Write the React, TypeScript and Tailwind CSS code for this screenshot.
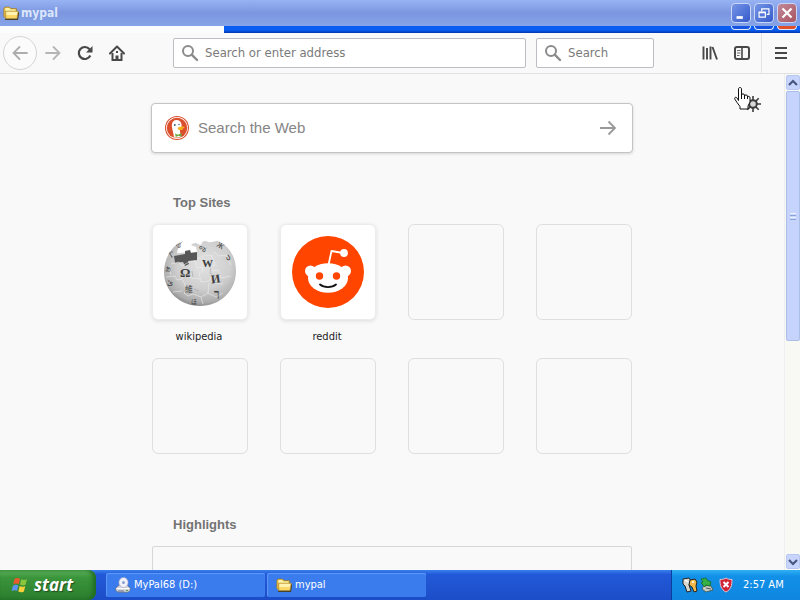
import type { ReactNode } from 'react';

function FolderIcon() {
  return (
    <svg viewBox="0 0 16 16" className="w-4 h-4 shrink-0">
      <path d="M2 14.500h12.500L15.800 7" fill="none" stroke="#4d4222" strokeWidth="1.200" />
      <path d="M.8 3.500 2 2h4.500L8 3.500h5.500V13h-11L.8 11.500z" fill="#e9bd45" stroke="#8f7428" strokeWidth=".6" />
      <path d="M2 4l1-1h3l1.500 1.500h5V7H3z" fill="#fdf3a8" />
      <path d="M2.500 6.200h12.800L14 13.500H2.800z" fill="#fbd765" stroke="#a27f2b" strokeWidth=".6" />
      <path d="M3.500 7h10.800l-.6 3H3.500z" fill="#fff3b4" />
    </svg>
  );
}

function DriveIcon() {
  return (
    <svg viewBox="0 0 16 16" className="w-4 h-4 shrink-0">
      <path d="M.8 11l3.500-3H12l3.200 3v2.500L13 15.200H3L.8 13.500z" fill="#d3d5dc" stroke="#555b70" strokeWidth=".6" />
      <path d="M1.500 11.500h13" stroke="#fff" />
      <path d="M3 14h6" stroke="#6c7388" />
      <ellipse cx="8.500" cy="5.500" rx="4.600" ry="5" fill="#f2f3fa" stroke="#9aa2bb" strokeWidth=".6" />
      <circle cx="8.500" cy="5.500" r="1.500" fill="#8ba2cf" />
      <path d="M11 13.500h2" stroke="#48a048" />
    </svg>
  );
}

function SearchIcon() {
  return (
    <svg viewBox="0 0 18 18" className="w-[18px] h-[18px] shrink-0" fill="none" stroke="#8b8b8b">
      <circle cx="7" cy="7" r="5" strokeWidth="2" />
      <path d="M10.700 10.700 16 16" strokeWidth="2.400" strokeLinecap="round" />
    </svg>
  );
}

function DuckIcon() {
  return (
    <svg viewBox="0 0 24 24" className="w-6 h-6 shrink-0">
      <circle cx="12" cy="12" r="12" fill="#d9522f" />
      <circle cx="12" cy="12" r="10.900" fill="#fff" />
      <circle cx="12" cy="12" r="10.200" fill="#dc4f2c" />
      <path d="M9 21.300C8.500 16 6.300 11.500 7 8c.6-2.800 2.500-4.300 5-4 3 .3 4.500 2.500 4.600 5.200.1 2-.8 4-1.800 5l1 6c-2 1.500-4.300 1.700-6.800 1.100z" fill="#fff" />
      <path d="M13 11.500c2-1 4.500-1.200 6.300-.8.8.4-.5 1.400-2 1.800 1 .3.700 1.300-.8 1.500-1.800.2-4.500-.2-3.500-2.500z" fill="#f7b21b" />
      <path d="M10 17.500l3 1.200 3.500-1.700v3.800l-3-1-2.800 1.200z" fill="#69a845" />
      <circle cx="9.800" cy="9" r=".9" fill="#34516b" />
      <circle cx="14" cy="8.500" r=".7" fill="#34516b" />
    </svg>
  );
}

function WikipediaLogo() {
  return (
    <svg viewBox="0 0 72 72" className="w-[72px] h-[72px]" fontFamily="Liberation Serif, Noto Sans CJK SC, serif" fill="#3d3d3d">
      <defs>
        <radialGradient id="globe" cx=".55" cy=".36" r=".68">
          <stop offset="0" stopColor="#e2e2e2" />
          <stop offset=".55" stopColor="#cfcfcf" />
          <stop offset=".85" stopColor="#adadad" />
          <stop offset="1" stopColor="#7d7d7d" />
        </radialGradient>
      </defs>
      <path
        d="M19 5c-2 3-5 6-6 12l20-1-1-5-5-2c2-2 5-3 7-1l3 1c1-4 4-5 7-3 3 1 6-1 9-1C65 9 72 21 72 35c0 20-16 35-36 35S0 55 0 36C0 23 7 10 19 5z"
        fill="url(#globe)"
      />
      <path d="M10 20l11-2v-3l5-1 1 3 6-1v8l-9 1 1 3-4 2-2-4-8 1z" fill="#575757" />
      <g fill="none" stroke="#ececec" strokeWidth=".6">
        <path d="M7 28l8-2 3 4 5-3 8-2 2 7 5-1 1 4-4 2 2 9 8-1 2-4 4 2-1 4 9 1M33 23l8-4 7 1 3-4 3 4 9-1M48 20l3 9-4 2 2 4 5-1 3 8 10-2M2 41l9-1 2 4 5-1 1-4 9 3 8 1M19 44l4 10-3 3 4 3 5-2 8 3 7-4 1-10M44 57l8 4 7-4" />
        <path d="M37 61l2 7M9 56l9-1M5 30l2 9M62 19l5 10" />
      </g>
      <path d="M28 35l1 6M47 31l-1 6 5 4M30 53l5 2" fill="none" stroke="#9a9a9a" strokeWidth=".5" />
      <text x="16" y="41" fontSize="13" fontWeight="bold">Ω</text>
      <text x="38" y="31" fontSize="11" fontWeight="bold">W</text>
      <text x="47" y="47" fontSize="12" fontWeight="bold" transform="rotate(-8 51 43)">И</text>
      <text x="21" y="56" fontSize="8">維</text>
      <text x="50" y="61" fontSize="11" fontWeight="bold">ך</text>
      <text x="1" y="35" fontSize="6">あ</text>
      <text x="3" y="49" fontSize="8">ئ</text>
      <text x="35" y="15" fontSize="8" transform="rotate(20 38 12)">જ</text>
      <text x="53" y="12" fontSize="8" transform="rotate(30 56 9)">Ж</text>
      <text x="62" y="24" fontSize="9">ა</text>
      <text x="5" y="21" fontSize="8" transform="rotate(-30 8 18)">Г</text>
      <text x="12" y="12" fontSize="7" transform="rotate(-30 14 9)">ש</text>
      <text x="27" y="68" fontSize="6">ほ</text>
    </svg>
  );
}

function RedditLogo() {
  return (
    <svg viewBox="0 0 72 72" className="w-[72px] h-[72px]">
      <circle cx="36" cy="36" r="36" fill="#ff4500" />
      <path d="M36.500 29 39.500 15 51 17" fill="none" stroke="#fff" strokeWidth="1.800" strokeLinejoin="round" />
      <circle cx="52" cy="17" r="3.900" fill="#fff" />
      <circle cx="18.500" cy="35" r="5.500" fill="#fff" />
      <circle cx="53.500" cy="35" r="5.500" fill="#fff" />
      <ellipse cx="36" cy="42" rx="20" ry="14.800" fill="#fff" />
      <circle cx="27.500" cy="40" r="3.700" fill="#ff4500" />
      <circle cx="44.500" cy="40" r="3.700" fill="#ff4500" />
      <path d="M28 48.500c4 3.400 12 3.400 16 0" fill="none" stroke="#111" strokeWidth="1.800" strokeLinecap="round" />
    </svg>
  );
}

function ToolButton({ label, children }: { label: string; children: ReactNode }) {
  return (
    <button aria-label={label} className="w-8 h-8 flex items-center justify-center text-[#484848]">
      {children}
    </button>
  );
}

const captionButtons = [
  {
    label: 'Minimize',
    top: 'bg-linear-to-br from-[#7795e6] to-[#3459cb]',
    bottom: 'bg-[#1553e0]',
    icon: <path d="M5 15h7" strokeWidth="3" />,
  },
  {
    label: 'Restore',
    top: 'bg-linear-to-br from-[#7795e6] to-[#3459cb]',
    bottom: 'bg-[#1553e0]',
    icon: <path d="M7.500 8V5.500h8v6H13M7.500 5.500h8M4.500 9.500h7v5h-7zM4 9h8" strokeWidth="1.300" />,
  },
  {
    label: 'Close',
    top: 'bg-linear-to-br from-[#c18a9c] to-[#a9545f]',
    bottom: 'bg-[#e0502a]',
    icon: <path d="M5 5l10 10M15 5 5 15" strokeWidth="2.400" />,
  },
];

function TitleBar() {
  return (
    <header>
      <div className="h-[26px] flex items-center px-[3px] bg-linear-to-b from-[#98b3f3] via-[#7b96df] to-[#86a4e8]">
        <FolderIcon />
        <h1 className="ml-0.5 flex-1 font-[DejaVu_Sans_Condensed,sans-serif] font-bold text-xs text-[#dbe6fc]">mypal</h1>
        <div className="flex gap-[3px]">
          {captionButtons.map((b) => (
            <button
              key={b.label}
              aria-label={b.label}
              className={`w-5 h-5 rounded-sm border border-[#c9d6f8] ${b.top}`}
            >
              <svg viewBox="0 0 20 20" className="w-[18px] h-[18px]" fill="none" stroke="#fff">{b.icon}</svg>
            </button>
          ))}
        </div>
      </div>
      <div className="h-[7px] flex">
        <div className="w-56 bg-[#fbfdfd]" />
        <div className="flex-1 flex justify-end gap-[3px] pr-[3px] bg-linear-to-b from-[#0a5df2] from-60% to-[#0237ad]">
          {captionButtons.map((b) => (
            <div key={b.label} className={`w-5 h-1 rounded-b-sm border border-t-0 border-[#dfe7fb] ${b.bottom}`} />
          ))}
        </div>
      </div>
    </header>
  );
}

function Toolbar() {
  return (
    <nav className="h-[41px] shrink-0 flex items-center pl-[3px] bg-[#f9f9fa] border-b border-[#e0e0e1]">
      <button aria-label="Back" className="w-[34px] h-[34px] rounded-full border border-[#d4d4d4] bg-[#fbfbfb] flex items-center justify-center text-[#adadad]">
        <svg viewBox="0 0 16 16" className="w-4 h-4" fill="none" stroke="currentColor" strokeWidth="1.800" strokeLinecap="round">
          <path d="M15 8H1.500M7.500 2 1.500 8l6 6" />
        </svg>
      </button>
      <div className="flex">
        <button aria-label="Forward" className="w-8 h-8 flex items-center justify-center text-[#b5b5b5]">
          <svg viewBox="0 0 16 16" className="w-4 h-4" fill="none" stroke="currentColor" strokeWidth="1.800" strokeLinecap="round">
            <path d="M1 8h13.500M8.500 2l6 6-6 6" />
          </svg>
        </button>
        <ToolButton label="Reload">
          <svg viewBox="0 0 16 16" className="w-4 h-4" fill="none" stroke="currentColor" strokeWidth="2.200">
            <path d="M13.300 10.500A6 6 0 1 1 12.500 4.200" />
            <path d="M15.500 1v6.500H9z" fill="currentColor" stroke="none" />
          </svg>
        </ToolButton>
        <ToolButton label="Home">
          <svg viewBox="0 0 16 16" className="w-4 h-4" fill="none" stroke="currentColor" strokeWidth="2">
            <path d="M1 8.500 8 1.500l7 7" strokeLinecap="round" strokeLinejoin="round" />
            <path d="M3.500 8v7h9V8" />
            <path d="M6.500 15v-4.500h3V15z" fill="currentColor" stroke="none" />
            <path d="M7 7h2" />
          </svg>
        </ToolButton>
      </div>
      <label className="ml-10 flex-1 h-[30px] flex items-center gap-1.5 px-[7px] bg-white border border-[#bdbdc4] rounded-xs">
        <SearchIcon />
        <input aria-label="Search or enter address" placeholder="Search or enter address" className="flex-1 min-w-0 outline-none text-[13px] placeholder:text-[#7a7a7a]" />
      </label>
      <label className="ml-2.5 w-[118px] h-[30px] flex items-center gap-1.5 px-[7px] bg-white border border-[#bdbdc4] rounded-xs">
        <SearchIcon />
        <input aria-label="Search" placeholder="Search" className="flex-1 min-w-0 outline-none text-[13px] placeholder:text-[#7a7a7a]" />
      </label>
      <div className="ml-10 flex items-center">
        <ToolButton label="Library">
          <svg viewBox="0 0 16 16" className="w-4 h-4" fill="none" stroke="currentColor" strokeWidth="1.900">
            <path d="M1.500 1.500v13M5 3v11.500M8.500 1.500v13M10.500 2l4.500 12.500" />
          </svg>
        </ToolButton>
        <ToolButton label="Sidebars">
          <svg viewBox="0 0 16 16" className="w-4 h-4" fill="none" stroke="currentColor">
            <rect x="1" y="2" width="14" height="12" rx="2" strokeWidth="2" />
            <path d="M8 2v12" strokeWidth="1.600" />
            <path d="M3 5.500h3.500M3 8h3.500M3 10.500h2.500" strokeWidth=".8" />
          </svg>
        </ToolButton>
      </div>
      <div className="ml-[3px] h-10 w-[39px] flex items-center justify-center border-l border-[#e3e3e4]">
        <ToolButton label="Open menu">
          <svg viewBox="0 0 16 16" className="w-4 h-4" stroke="currentColor" strokeWidth="2">
            <path d="M2 3h12M2 8h12M2 13h12" />
          </svg>
        </ToolButton>
      </div>
    </nav>
  );
}

const topSites = [
  { name: 'wikipedia', logo: <WikipediaLogo /> },
  { name: 'reddit', logo: <RedditLogo /> },
];

function NewTab() {
  return (
    <main className="relative flex-1 overflow-hidden bg-[#f9f9fa] pt-[29px]">
      <button aria-label="Customize your New Tab page" className="absolute top-[22px] right-[23px] w-4 h-4">
        <svg viewBox="0 0 16 16" fill="none" stroke="#3d3d3d">
          <circle cx="8" cy="8" r="3.800" strokeWidth="2" fill="#d8d8d8" />
          <path d="M8 0v4M8 12v4M0 8h4M12 8h4M2.300 2.300l2.800 2.800M10.900 10.900l2.800 2.800M13.700 2.300l-2.800 2.800M5.100 10.900l-2.800 2.800" strokeWidth="1.600" />
        </svg>
      </button>
      <svg viewBox="0 0 17 23" className="absolute top-[13px] right-[33px] w-[17px] h-[23px]" fill="#fff" stroke="#111" strokeLinejoin="round">
        <path d="M4.500 13.500V2c0-2 3-2 3 0v6c0-1.500 3-1.500 3 0v1c0-1.500 3-1.300 3 0v1c.5-1 2.500-.8 2.500.8V15l-2 4v3H6v-2.500L3 15.500.8 12c-.7-1.500 1.200-2.500 2.200-1z" />
        <path d="M7.500 7v5M10.500 8.500V12M13.500 9.500V12" />
      </svg>

      <div className="w-[480px] mx-auto">
        <form className="-mx-px h-[50px] flex items-center pl-[13px] pr-4 bg-white rounded-sm border border-[#c4c4c4] shadow-[0_1px_3px_rgba(0,0,0,0.15)]">
          <DuckIcon />
          <input
            aria-label="Search the Web"
            placeholder="Search the Web"
            className="ml-[9px] flex-1 outline-none font-[Liberation_Sans,sans-serif] text-[15px] placeholder:text-[#858585]"
          />
          <button type="button" aria-label="Search">
            <svg viewBox="0 0 16 16" className="w-4 h-4" fill="none" stroke="#999" strokeWidth="1.800">
              <path d="M0 8h15M8.500 1.500 15 8l-6.500 6.500" />
            </svg>
          </button>
        </form>

        <section className="mt-10">
          <h2 className="pl-[21px] leading-5 font-[Liberation_Sans,sans-serif] font-bold text-[13px] text-[#737373]">Top Sites</h2>
          <ul className="mt-[11px] grid grid-cols-4 gap-x-8">
            {topSites.map((site) => (
              <li key={site.name} className="h-[134px]">
                <a href="#" className="flex flex-col items-center">
                  <span className="w-24 h-24 flex items-center justify-center bg-white rounded-md border border-[#ececec] shadow-[0_1px_4px_rgba(12,12,13,0.12)]">
                    {site.logo}
                  </span>
                  <span className="mt-[9px] pr-0.5 leading-4 text-[11px] text-[#1c1c1c]">{site.name}</span>
                </a>
              </li>
            ))}
            {[3, 4, 5, 6, 7, 8].map((slot) => (
              <li key={slot} className="h-[134px]">
                <div className="w-24 h-24 rounded-md border border-[#dfdfe0]" />
              </li>
            ))}
          </ul>
        </section>

        <section className="mt-[23px]">
          <h2 className="pl-[21px] leading-5 font-[Liberation_Sans,sans-serif] font-bold text-[13px] text-[#737373]">Highlights</h2>
          <div className="mt-[11px] h-64 rounded-xs border border-[#d7d7d8]" />
        </section>
      </div>
    </main>
  );
}

function ScrollBar() {
  const arrow = 'w-[14px] h-[15px] shrink-0 flex items-center justify-center rounded-xs border border-[#b7c7f1] bg-[#c7d4fb]';
  return (
    <div className="w-4 shrink-0 flex flex-col items-center py-px bg-[#f8f8f4] border-l border-[#eceef0]">
      <button aria-label="Scroll up" className={arrow}>
        <svg viewBox="0 0 10 8" className="w-2.5 h-2" fill="none" stroke="#46587f" strokeWidth="2.200">
          <path d="M1 6l4-4 4 4" />
        </svg>
      </button>
      <div className="mt-px w-[14px] basis-[250px] flex flex-col items-center justify-center gap-px rounded-xs border border-[#a9bfe8] bg-[#c6d3fc]">
        <span className="w-1.5 h-px bg-[#eef4fe]" />
        <span className="w-1.5 h-px bg-[#8ca4dc]" />
        <span className="w-1.5 h-px bg-[#eef4fe]" />
        <span className="w-1.5 h-px bg-[#8ca4dc]" />
      </div>
      <button aria-label="Scroll down" className={`mt-auto ${arrow}`}>
        <svg viewBox="0 0 10 8" className="w-2.5 h-2" fill="none" stroke="#46587f" strokeWidth="2.200">
          <path d="M1 2l4 4 4-4" />
        </svg>
      </button>
    </div>
  );
}

const tasks = [
  { title: 'MyPal68 (D:)', icon: <DriveIcon /> },
  { title: 'mypal', icon: <FolderIcon /> },
];

function TaskBar() {
  return (
    <footer className="h-[30px] shrink-0 flex bg-linear-to-b from-[#3a80ee] via-[#2259d8] via-15% to-[#1c4dc8] text-white">
      <button className="w-24 h-full flex items-center gap-1 pl-[11px] rounded-r-lg bg-linear-to-b from-[#5fb45f] via-[#3a953b] via-25% to-[#2b7d2d] shadow-[inset_-3px_0_4px_#1f6a22]">
        <svg viewBox="0 0 19 18" className="w-[19px] h-[18px]">
          <path d="M3.500 3c2-1.400 3.700-1.200 5.500-.2L7.700 8.200C6 7.200 4.200 7.200 2.200 8.400z" fill="#ea5a2c" />
          <path d="M10.300 3.300c1.900 1 3.700 1 5.700-.2l-1.400 5.500c-2 1.200-3.700 1-5.600 0z" fill="#8cc63c" />
          <path d="M1.900 9.700c2-1.200 3.700-1.100 5.500-.2L6 14.900c-1.700-1-3.500-.9-5.400.2z" fill="#5d94ee" />
          <path d="M8.700 10.100c1.900 1 3.600 1 5.600-.1l-1.400 5.400c-2 1.200-3.700 1.100-5.600.1z" fill="#fbcf3b" />
        </svg>
        <span className="font-[Open_Sans,sans-serif] font-bold italic text-[17px] leading-5 [text-shadow:1px_1px_1px_#1e4d1f]">start</span>
      </button>
      <div className="ml-2.5 flex-1 flex gap-0.5 py-[3px]">
        {tasks.map((task) => (
          <button
            key={task.title}
            className="w-[159px] flex items-center gap-[3px] pl-2 rounded-xs bg-[#3a7bee] border-l border-[#5c95f5] text-[11px] shadow-[inset_0_1px_1px_#5f9bf5]"
          >
            {task.icon}
            {task.title}
          </button>
        ))}
      </div>
      <div className="w-[129px] flex items-center pl-2.5 bg-linear-to-b from-[#2fb0f4] via-[#1290e8] via-20% to-[#0f86df] border-l border-[#0c3f9c]">
        <svg viewBox="0 0 16 16" className="w-4 h-4">
          <path d="M1 2l6-1 2 3-2 4 2 6-4 1-2-6-2-2z" fill="#d8d8d0" stroke="#222" />
          <path d="M8 3l5-1 2 3-1 4 1 5-3 1-2-5-3-2z" fill="#f3b94a" stroke="#222" />
          <path d="M3 3l3 2M10 5h2" stroke="#fff" strokeWidth="1.500" />
        </svg>
        <svg viewBox="0 0 16 16" className="w-4 h-4 ml-0.5">
          <path d="M4 8l7 1 2 4-7 2-4-3z" fill="#c5cbc5" stroke="#415041" strokeWidth=".8" />
          <path d="M6 11l5 1" stroke="#555" />
          <path d="M1 2l5-1 1 2 4 2-1 4-4-1-1 2-4-4 2-1z" fill="#35b045" stroke="#176a26" strokeWidth=".8" />
        </svg>
        <svg viewBox="0 0 16 16" className="w-4 h-4 ml-0.5">
          <path d="M2 2.500C4.500 2.500 6.500 2 8 1c1.500 1 3.500 1.500 6 1.500 0 6-1 10-6 12.500C3 12.500 2 8.500 2 2.500z" fill="#d32335" stroke="#e6c3cd" />
          <path d="M5.500 5l5 5M10.500 5l-5 5" stroke="#fff" strokeWidth="2" />
        </svg>
        <time className="ml-[9px] text-[11px]">2:57 AM</time>
      </div>
    </footer>
  );
}

export default function App() {
  return (
    <div className="h-screen flex flex-col overflow-hidden font-[DejaVu_Sans_Condensed,sans-serif]">
      <TitleBar />
      <Toolbar />
      <div className="flex-1 min-h-0 flex">
        <NewTab />
        <ScrollBar />
      </div>
      <TaskBar />
    </div>
  );
}
